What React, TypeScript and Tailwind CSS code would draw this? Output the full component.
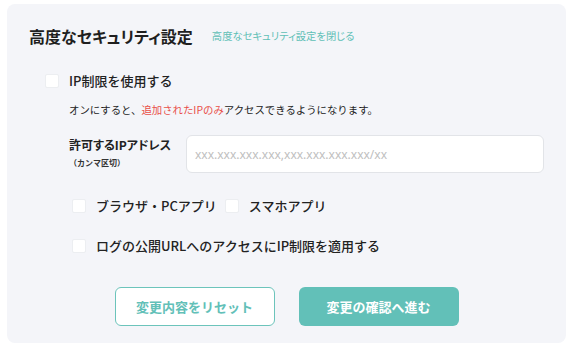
import React, { useState } from 'react';

const font = { fontFamily: '"Noto Sans CJK JP", "Noto Sans", sans-serif' };

type CheckProps = { checked: boolean; onChange: () => void; label: string };

const Check: React.FC<CheckProps> = ({ checked, onChange, label }) => (
  <label className="flex items-center h-5 cursor-pointer">
    <span
      onClick={onChange}
      className={`w-[14px] h-[14px] rounded-[2px] border ${checked ? 'bg-[#62c0b8] border-[#62c0b8]' : 'bg-white border-[#eceef1]'}`}
    />
    <span className="ml-[10px] text-[13px] font-medium text-[#222]">{label}</span>
  </label>
);

const App: React.FC = () => {
  const [useIp, setUseIp] = useState(false);
  const [browser, setBrowser] = useState(false);
  const [mobile, setMobile] = useState(false);
  const [publicLog, setPublicLog] = useState(false);
  const [ips, setIps] = useState('');

  return (
    <div className="w-[572px] h-[350px] bg-white pl-[7px] pt-[4px]" style={font}>
      <div className="w-[559px] h-[339px] rounded-lg bg-[#f4f5f9] pl-[22px] pt-[20px]">
        {/* Header */}
        <div className="flex items-center h-6">
          <h2 className="text-[16px] font-bold text-[#1f1f1f] [font-feature-settings:'palt']">高度なセキュリティ設定</h2>
          <button className="ml-[19px] text-[10.3px] text-[#5fbfb6] [font-feature-settings:'palt']">
            高度なセキュリティ設定を閉じる
          </button>
        </div>

        {/* IP restriction toggle */}
        <div className="ml-[16px] mt-[23px]">
          <Check checked={useIp} onChange={() => setUseIp(!useIp)} label="IP制限を使用する" />
        </div>
        <p className="ml-[40px] mt-[11px] h-4 leading-4 text-[10.4px] text-[#222]">
          オンにすると、<span className="text-[#e9504a]">追加されたIPのみ</span>アクセスできるようになります。
        </p>

        {/* Allowed IPs */}
        <div className="ml-[40px] mt-[17px] flex">
          <div className="w-[117px]">
            <p className="mt-[1px] leading-[18px] text-[12px] font-bold text-[#222] [font-feature-settings:'palt']">許可するIPアドレス</p>
            <p className="mt-[2px] leading-[14px] text-[8px] font-bold text-[#333]">（カンマ区切）</p>
          </div>
          <input
            value={ips}
            onChange={(e) => setIps(e.target.value)}
            placeholder="xxx.xxx.xxx.xxx,xxx.xxx.xxx.xxx/xx"
            className="w-[358px] h-[38px] rounded-md border border-[#e2e4e8] bg-white px-[8px] text-[12px] text-[#333] placeholder:text-[#c0c0c0] outline-none"
            style={{ fontFamily: '"Noto Sans", "Noto Sans CJK JP", sans-serif' }}
          />
        </div>

        {/* Targets */}
        <div className="ml-[43px] mt-[23px] flex items-center gap-[8px]">
          <Check checked={browser} onChange={() => setBrowser(!browser)} label="ブラウザ・PCアプリ" />
          <Check checked={mobile} onChange={() => setMobile(!mobile)} label="スマホアプリ" />
        </div>
        <div className="ml-[43px] mt-[20px]">
          <Check checked={publicLog} onChange={() => setPublicLog(!publicLog)} label="ログの公開URLへのアクセスにIP制限を適用する" />
        </div>

        {/* Actions */}
        <div className="mt-[31px] pr-[22px] flex justify-center gap-[24px]">
          <button className="w-[160px] h-[39px] rounded-md border border-[#6cc4bb] bg-white text-[13px] font-bold text-[#62c0b8]">
            変更内容をリセット
          </button>
          <button className="w-[160px] h-[39px] rounded-md bg-[#62c0b8] text-[13px] font-bold text-white">
            変更の確認へ進む
          </button>
        </div>
      </div>
    </div>
  );
};

export default App;
